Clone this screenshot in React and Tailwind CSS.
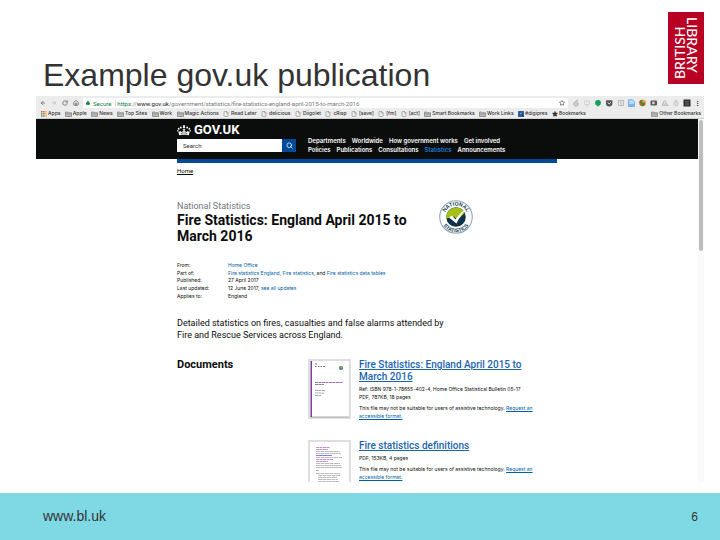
import {
  ArrowLeft,
  ArrowRight,
  RotateCw,
  House,
  Lock,
  Star,
  File,
  Search,
  EllipsisVertical,
} from "lucide-react";

const bookmarks = [
  ["apps", "Apps"],
  ["folder", "Apple"],
  ["folder", "News"],
  ["folder", "Top Sites"],
  ["folder", "Work"],
  ["folder", "Magic Actions"],
  ["file", "Read Later"],
  ["file", "delicious"],
  ["file", "Diigolet"],
  ["file", "cRisp"],
  ["file", "[save]"],
  ["file", "[fm]"],
  ["file", "[act]"],
  ["folder", "Smart Bookmarks"],
  ["folder", "Work Links"],
  ["search", "#digipres"],
  ["star", "Bookmarks"],
];

function FolderIcon() {
  return (
    <svg viewBox="0 0 14 12" className="h-[6px] w-[7px] shrink-0" aria-hidden="true">
      <path d="M1 2h4.5l1 1.4H13V11H1z" fill="#c4c4c4" stroke="#777" strokeWidth="1.3" />
      <path d="M1 5.2h12M1 7.6h12" stroke="#8a8a8a" strokeWidth="1" />
    </svg>
  );
}

function BookmarkIcon({ kind }) {
  if (kind === "apps") {
    const colours = ["#e5503e", "#e5503e", "#f0b429", "#3fa757", "#e5503e", "#f0b429", "#3fa757", "#4a86e8", "#f0b429"];
    return (
      <svg viewBox="0 0 12 12" className="size-[6px] shrink-0" aria-hidden="true">
        {colours.map((c, i) => (
          <rect key={i} x={(i % 3) * 4.3} y={Math.floor(i / 3) * 4.3} width="3" height="3" fill={c} />
        ))}
      </svg>
    );
  }
  if (kind === "folder") return <FolderIcon />;
  if (kind === "file") return <File className="mr-px size-[6px] shrink-0 text-[#777]" strokeWidth={2} />;
  if (kind === "star") return <Star className="size-[6px] shrink-0 fill-[#333] text-[#333]" />;
  return (
    <svg viewBox="0 0 12 12" className="size-[6px] shrink-0" aria-hidden="true">
      <rect width="12" height="12" rx="1" fill="#2f5d9e" />
      <circle cx="5.5" cy="5" r="2.6" fill="#7fa6d8" stroke="#14284b" />
      <path d="M7.5 7l3 3.5" stroke="#14284b" strokeWidth="2" />
    </svg>
  );
}

function Extensions() {
  return (
    <svg viewBox="0 0 122 10" className="h-[10px] w-[122px] shrink-0" aria-hidden="true">
      <g fill="none" stroke="#aaa">
        <circle cx="4" cy="6" r="2.2" />
        <path d="M3.5 3.5L6 1.8M2.5 6h3" />
        <rect x="12.5" y="3" width="5" height="3.6" rx="1" stroke="#ccc" />
        <path d="M14 8h2" stroke="#ccc" />
      </g>
      <circle cx="26" cy="4.8" r="2.9" fill="#12a05a" />
      <path d="M25 7h2l-1 2z" fill="#12a05a" />
      <path d="M34 2.2h6.4v3a3.2 3.2 0 0 1-6.4 0z" fill="#555" />
      <path d="M35.6 4.4l1.6 1.5 1.6-1.5" fill="none" stroke="#eee" />
      <rect x="46.5" y="2.5" width="5" height="5" fill="#eee" stroke="#bbb" />
      <path d="M48 4h2M49 4v3" stroke="#bbb" />
      <path d="M56.5 1.8h4l2 2v4.7h-6z" fill="#b7dbfb" stroke="#70b2ef" />
      <path d="M57 7h5" stroke="#5b9de4" strokeWidth="1.2" />
      <circle cx="70.5" cy="5" r="3.2" fill="#d95a2e" />
      <path d="M67.3 5a3.2 3.2 0 0 1 3.2-3.2V5z" fill="#8a6d2c" />
      <path d="M70.5 1.8A3.2 3.2 0 0 1 73.7 5h-3.2z" fill="#eaa934" />
      <path d="M68 4.5h5l-2.500 4z" fill="#2e9b3f" />
      <rect x="78.5" y="2.5" width="6.5" height="5" rx="1" fill="#555" />
      <circle cx="81.4" cy="5" r="1.4" fill="#cdd" />
      <circle cx="83.8" cy="4.2" r=".8" fill="#d33" />
      <path d="M90 7.5l2-4.5h1.5l.5 2 2 2.5zM91 6h4" fill="none" stroke="#bbb" />
      <rect x="102" y="4" width="4" height="3.6" rx=".6" fill="#ddd" stroke="#ccc" />
      <path d="M103 4V2.5h2V4" fill="none" stroke="#ccc" />
      <rect x="111.5" y="1.5" width="7" height="7" rx=".5" fill="#2b2b2b" />
      <path d="M113 3.5h4M113 5.2h4M113 6.8h4" stroke="#888" strokeWidth=".6" />
    </svg>
  );
}

function Crown() {
  return (
    <svg viewBox="0 0 28 22" className="h-[11px] w-[14px] shrink-0" aria-hidden="true">
      <g fill="#fff">
        <circle cx="14" cy="4.5" r="2.3" />
        <path d="M13 0h2v2h-2zM12 .7h4v1h-4z" />
        <circle cx="7.7" cy="5" r="1.9" />
        <circle cx="20.3" cy="5" r="1.9" />
        <circle cx="3.3" cy="7.5" r="1.8" />
        <circle cx="24.7" cy="7.5" r="1.8" />
        <circle cx="1.5" cy="11.6" r="1.5" />
        <circle cx="26.5" cy="11.6" r="1.5" />
        <path d="M4.5 20.5L2.2 12.5c1.6 1.8 3 1.6 4.3-.8 .8 2.6 3 2.8 5.2.3L12 8.5h4l.3 3.5c2.2 2.5 4.4 2.3 5.2-.3 1.3 2.4 2.7 2.6 4.3.8l-2.3 8C17.5 19.2 10.5 19.2 4.5 20.5z" />
      </g>
      <path d="M7 17.2C11.5 16 16.5 16 21 17.2" stroke="#0b0c0c" fill="none" />
      <path d="M9.5 14.5h2M16.5 14.5h2M14 10v4" stroke="#0b0c0c" />
    </svg>
  );
}

function StatisticsBadge() {
  return (
    <svg viewBox="0 0 68 68" className="size-[34px] shrink-0" role="img" aria-label="National Statistics">
      <circle cx="34" cy="34" r="32.5" fill="#fff" stroke="#8fa9b8" strokeWidth="2.2" />
      <circle cx="34" cy="34" r="19.5" fill="#0b3448" />
      <path d="M14.5 34a19.500 19.500 0 0 1 37-8L37 40l-7-7-15 4z" fill="#a4bf16" />
      <path d="M20 35l6-4 7 8C38 31 44 25 54 18c-8 9-14 18-19 29z" fill="#fff" />
      <defs>
        <path id="badge-top" d="M11 38A23.300 23.300 0 1 1 57 38" />
        <path id="badge-bottom" d="M3.500 34A30.500 30.500 0 0 0 64.500 34" />
      </defs>
      <g fill="#17384c" fontFamily="Liberation Sans, sans-serif" fontWeight="700" fontSize="10.5" textAnchor="middle">
        <text><textPath href="#badge-top" startOffset="50%">NATIONAL</textPath></text>
        <text><textPath href="#badge-bottom" startOffset="50%">STATISTICS</textPath></text>
      </g>
    </svg>
  );
}

function ReportThumb() {
  return (
    <svg viewBox="0 0 43 60" className="h-[60px] w-[43px]" aria-hidden="true">
      <rect width="43" height="60" fill="#dedede" />
      <rect x="2" y="2" width="39" height="56" fill="#fff" />
      <path d="M2 58h39" stroke="#aaa" />
      <rect x="2.5" y="2" width="1.5" height="56" fill="#7d3c98" />
      <path d="M7 5h2M7 7.5h1.5M10 7.5h1.5M12.5 7.5h1.5M15 7.5h2" stroke="#777" />
      <circle cx="33" cy="9" r="2" fill="#3e7d7b" />
      <circle cx="33.5" cy="8.5" r="1" fill="#9ab52e" />
      <path d="M7 23.5h28M7 25.5h9" stroke="#a06cb5" strokeDasharray="3 .5" />
      <path d="M7 31.5h10M7 34h9M7 36.5h6" stroke="#aaa" strokeDasharray="3 .5" />
    </svg>
  );
}

function DefinitionsThumb() {
  const lines = [11.5, 13.5, 17.5, 23.5, 25.5, 27.5, 33.5, 35.5, 37.5, 39.5, 41.5, 43.5];
  return (
    <svg viewBox="0 0 43 60" className="h-[60px] w-[43px]" aria-hidden="true">
      <rect width="43" height="60" fill="#dedede" />
      <rect x="2" y="2" width="39" height="56" fill="#fff" />
      <path d="M8 7.5h14M8 9.5h12M8 19.5h17M8 21.5h12M8 30.5h3" stroke="#c98fd2" strokeDasharray="3 .5" />
      {lines.map((y, i) => (
        <path key={y} d={`M${i > 6 ? 10 : 8} ${y}h${i > 6 ? 19 + (i % 4) : 24 + (i % 3)}`} stroke="#aaa" strokeWidth=".8" strokeDasharray="4 .5" />
      ))}
      <path d="M8 15.5h16" stroke="#7b82ea" />
    </svg>
  );
}

function Link({ children }) {
  return <a href="#" className="text-[#005ea5]">{children}</a>;
}

function Document({ thumb, title, details }) {
  return (
    <article className="flex gap-2">
      <div className="shrink-0">{thumb}</div>
      <div className="min-w-0 flex-1">
        <h3 className="text-[10px] leading-[12px] font-medium">
          <a href="#" className="text-[#1a65b0] underline">{title}</a>
        </h3>
        <div className="mt-[2px] font-['Inter',sans-serif] text-[5px] leading-[8px]">
          {details.map((d) => <p key={d}>{d}</p>)}
        </div>
        <p className="mt-[3px] font-['Inter',sans-serif] text-[5px] leading-[8px]">
          This file may not be suitable for users of assistive technology.{" "}
          <a href="#" className="text-[#005ea5] underline">Request an<br />accessible format.</a>
        </p>
      </div>
    </article>
  );
}

function BrowserChrome() {
  return (
    <div className="bg-[#ececec] font-['Inter',sans-serif] text-[5px] text-[#333]">
      <div className="flex h-[13px] items-center pt-px pr-[3px]">
        <div className="flex shrink-0 items-center gap-[5px] pr-1 pl-1 text-[#666]">
          <button aria-label="Back"><ArrowLeft className="size-[6px]" strokeWidth={3} /></button>
          <button aria-label="Forward" className="text-[#bbb]"><ArrowRight className="size-[6px]" strokeWidth={3} /></button>
          <button aria-label="Reload"><RotateCw className="size-[6px]" strokeWidth={3} /></button>
          <button aria-label="Home"><House className="size-[6px]" strokeWidth={3} /></button>
        </div>
        <div className="flex h-[10px] min-w-0 flex-1 items-center bg-white px-[3px] font-['Roboto',sans-serif] text-[6px]">
          <Lock className="size-[4px] fill-[#0a8043] text-[#0a8043]" strokeWidth={3} />
          <span className="ml-[3px] text-[#0a8043]">Secure</span>
          <span className="ml-1 flex-1 border-l border-[#ddd] pl-px leading-[7px] text-[#777]">
            <span className="text-[#0a8043]">https</span>://<span className="text-[#111]">www.gov.uk</span>/government/statistics/fire-statistics-england-april-2015-to-march-2016
          </span>
          <Star className="size-[6px] text-[#555]" strokeWidth={3} />
        </div>
        <div className="flex items-center pl-1">
          <Extensions />
          <button aria-label="Menu"><EllipsisVertical className="size-[7px] text-[#555]" strokeWidth={3} /></button>
        </div>
      </div>
      <div className="flex h-[10px] items-center justify-between border-b border-[#d0d0d0] pr-[3px] pl-[5px] font-medium">
        <div className="flex w-[545px] items-center justify-between">
          {bookmarks.map(([kind, label]) => (
            <a key={label} href="#" className="flex items-center gap-px whitespace-nowrap">
              <BookmarkIcon kind={kind} />
              {label}
            </a>
          ))}
        </div>
        <a href="#" className="flex items-center gap-px whitespace-nowrap"><FolderIcon />Other Bookmarks</a>
      </div>
    </div>
  );
}

function GovHeader() {
  return (
    <header className="h-10 bg-[#0b0c0c] text-white">
      <div className="mx-auto flex max-w-[380px] gap-3">
        <div className="w-[119px]">
          <a href="#" className="mt-[5px] flex items-center gap-[3px] text-[13px] leading-[12px] font-bold">
            <Crown />GOV.UK
          </a>
          <form className="mt-[3px] flex h-[13px]" onSubmit={(e) => e.preventDefault()}>
            <input aria-label="Search" placeholder="Search" className="min-w-0 flex-1 bg-white px-[6px] text-[6px] text-[#333] placeholder:text-[#333]" />
            <button aria-label="Submit search" className="flex w-[14px] items-center justify-center bg-[#004b99]">
              <Search className="size-[7px]" strokeWidth={2.5} />
            </button>
          </form>
        </div>
        <nav className="flex flex-col gap-px pt-[18px] font-['Inter',sans-serif] text-[6px] leading-[8px] font-semibold whitespace-nowrap">
          <div className="flex gap-[6px]">
            <a href="#">Departments</a><a href="#">Worldwide</a><a href="#">How government works</a><a href="#">Get involved</a>
          </div>
          <div className="flex gap-[6px]">
            <a href="#">Policies</a><a href="#">Publications</a><a href="#">Consultations</a><a href="#" className="text-[#1d7fdb]">Statistics</a><a href="#">Announcements</a>
          </div>
        </nav>
      </div>
    </header>
  );
}

function GovPage() {
  return (
    <div className="min-w-0 flex-1 font-['Roboto',sans-serif] text-[#0b0c0c]">
      <GovHeader />
      <main className="mx-auto max-w-[380px]">
        <div className="h-1 bg-[#004b99]" />
        <a href="#" className="mt-1 block text-[6px] leading-[8px] underline">Home</a>
        <div className="mt-[25px] flex">
          <div className="w-[262px]">
            <p className="text-[9px] leading-[12px] text-[#6f777b]">National Statistics</p>
            <h1 className="text-[14px] leading-[16px] font-bold">Fire Statistics: England April 2015 to<br />March 2016</h1>
          </div>
          <StatisticsBadge />
        </div>
        <dl className="mt-[18px] grid h-[38px] grid-cols-[51px_1fr] grid-rows-5 items-center font-['Inter',sans-serif] text-[5px] leading-[7px]">
          <dt>From:</dt><dd><Link>Home Office</Link></dd>
          <dt>Part of:</dt><dd><Link>Fire statistics England</Link>, <Link>Fire statistics</Link>, and <Link>Fire statistics data tables</Link></dd>
          <dt>Published:</dt><dd>27 April 2017</dd>
          <dt>Last updated:</dt><dd>12 June 2017, <Link>see all updates</Link></dd>
          <dt>Applies to:</dt><dd>England</dd>
        </dl>
        <p className="mt-[17px] text-[9px] leading-[12px]">
          Detailed statistics on fires, casualties and false alarms attended by<br />Fire and Rescue Services across England.
        </p>
        <section className="mt-[18px] flex">
          <h2 className="w-[131px] shrink-0 text-[11px] leading-[12px] font-bold">Documents</h2>
          <div className="flex flex-1 flex-col gap-5">
            <Document
              thumb={<ReportThumb />}
              title={<>Fire Statistics: England April 2015 to<br />March 2016</>}
              details={["Ref: ISBN 978-1-78655-402-4, Home Office Statistical Bulletin 05-17", "PDF, 787KB, 18 pages"]}
            />
            <Document thumb={<DefinitionsThumb />} title="Fire statistics definitions" details={["PDF, 153KB, 4 pages"]} />
          </div>
        </section>
      </main>
    </div>
  );
}

function LibraryLogo() {
  return (
    <div className="flex h-[72px] w-[36px] justify-center bg-[#b90024] font-['Lato',sans-serif] text-[14px] leading-[12px] font-medium text-white">
      <span className="rotate-180 pt-[5px] [writing-mode:vertical-rl]">BRITISH</span>
      <span className="pt-[5px] [writing-mode:vertical-rl]">LIBRARY</span>
    </div>
  );
}

export default function App() {
  return (
    <div className="flex h-screen flex-col overflow-hidden bg-white font-['Liberation_Sans',Arial,sans-serif] text-[#333]">
      <header className="flex h-24 shrink-0 items-start justify-between pt-3 pr-4 pl-[43px]">
        <h1 className="mt-[45px] text-[32px] leading-[37px]">Example gov.uk publication</h1>
        <LibraryLogo />
      </header>
      <section className="mr-4 ml-9 flex min-h-0 flex-1 flex-col overflow-hidden">
        <BrowserChrome />
        <div className="flex min-h-0 flex-1 overflow-hidden">
          <GovPage />
          <div className="w-[6px] shrink-0 bg-[#fafafa] pt-px">
            <div className="mx-auto h-[131px] w-[4px] rounded-full bg-[#bdbdbd]" />
          </div>
        </div>
      </section>
      <footer className="mt-[11px] flex h-[47px] shrink-0 items-center justify-between bg-[#7fd9e4] pr-[22px] pl-[43px]">
        <a href="#" className="text-[14px]">www.bl.uk</a>
        <span className="text-[12px]">6</span>
      </footer>
    </div>
  );
}
